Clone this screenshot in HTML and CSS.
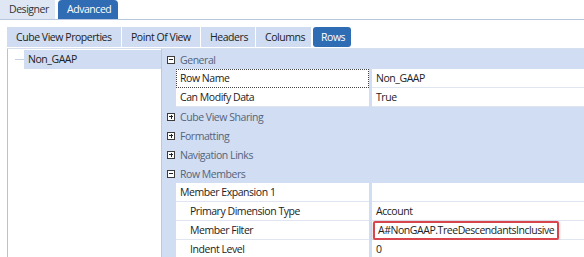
FILE: index.html
```html
<!DOCTYPE html>
<html lang="en">
<head>
    <meta charset="UTF-8">
    <title>Cube View - Rows</title>
    <link rel="stylesheet" href="styles.css">
</head>
<body>
    <div class="top-tabs">
        <div class="top-tab">Designer</div>
        <div class="top-tab active">Advanced</div>
    </div>
    <div class="sub-tabs">
        <div class="sub-tab tab-props">Cube View Properties</div>
        <div class="sub-tab tab-pov">Point Of View</div>
        <div class="sub-tab tab-headers">Headers</div>
        <div class="sub-tab tab-columns">Columns</div>
        <div class="sub-tab tab-rows active">Rows</div>
    </div>
    <div class="main">
        <div class="tree">
            <div class="tree-item">
                <span class="tree-line"></span>
                <span class="tree-label">Non_GAAP</span>
            </div>
        </div>
        <div class="grid">
            <div class="row cat">
                <span class="toggle minus"></span>
                <span class="cat-name">General</span>
            </div>
            <div class="row prop">
                <span class="gutter"></span>
                <span class="name focus">Row Name</span>
                <span class="value">Non_GAAP</span>
            </div>
            <div class="row prop">
                <span class="gutter"></span>
                <span class="name">Can Modify Data</span>
                <span class="value">True</span>
            </div>
            <div class="row cat">
                <span class="toggle plus"></span>
                <span class="cat-name">Cube View Sharing</span>
            </div>
            <div class="row cat">
                <span class="toggle plus"></span>
                <span class="cat-name">Formatting</span>
            </div>
            <div class="row cat">
                <span class="toggle plus"></span>
                <span class="cat-name">Navigation Links</span>
            </div>
            <div class="row cat">
                <span class="toggle minus"></span>
                <span class="cat-name">Row Members</span>
            </div>
            <div class="row prop">
                <span class="gutter"></span>
                <span class="name">Member Expansion 1</span>
                <span class="value"></span>
            </div>
            <div class="row prop">
                <span class="gutter"></span>
                <span class="name sub">Primary Dimension Type</span>
                <span class="value">Account</span>
            </div>
            <div class="row prop">
                <span class="gutter"></span>
                <span class="name sub">Member Filter</span>
                <span class="value"><span class="highlight">A#NonGAAP.TreeDescendantsInclusive</span></span>
            </div>
            <div class="row prop">
                <span class="gutter"></span>
                <span class="name sub">Indent Level</span>
                <span class="value">0</span>
            </div>
        </div>
    </div>
</body>
</html>
```
FILE: styles.css
```css
body {
    margin: 0;
    font-family: 'Open Sans', sans-serif;
    font-size: 10.5px;
    letter-spacing: -0.45px;
    color: #222;
    background: #fff;
    height: 257px;
    overflow: hidden;
}
.top-tabs {
    display: flex;
    gap: 3px;
    height: 19px;
    border-bottom: 1px solid #b8c6de;
}
.top-tab {
    padding: 0 9px;
    line-height: 19px;
    background-color: #dfe7f4;
    color: #333;
}
.top-tab:first-child {
    width: 37px;
}
.top-tab.active {
    width: 42px;
    background-color: #2f6cb4;
    color: #fff;
    border-radius: 4px 4px 0 0;
}
.sub-tabs {
    display: flex;
    gap: 1px;
    margin: 7px 0 0 7px;
    height: 20px;
}
.sub-tab {
    box-sizing: border-box;
    padding: 0 0 0 9px;
    line-height: 20px;
    background-color: #cfdcf1;
    color: #222;
    white-space: nowrap;
}
.tab-props { width: 114px; }
.tab-pov { width: 78px; }
.tab-headers { width: 54px; }
.tab-columns { width: 55px; }
.tab-rows { width: 38px; }
.sub-tab.active {
    margin-left: 1px;
    padding-left: 8px;
    background-color: #2e6cb3;
    color: #fff;
    border-radius: 3px;
}
.main {
    display: flex;
    margin: 1px 0 0 7px;
    border-top: 1px solid #d6dfee;
    height: 209px;
}
.tree {
    width: 153px;
    padding-top: 1px;
    border-left: 1px solid #b3c1e2;
    background: #fff;
}
.tree-item {
    display: flex;
    align-items: center;
    height: 19px;
}
.tree-line {
    width: 9px;
    margin-left: 7px;
    border-top: 1px solid #c6cfdf;
}
.tree-label {
    flex: 1;
    padding-left: 4px;
    line-height: 19px;
    background-color: #cfdcf1;
}
.grid {
    flex: 1;
    padding-top: 1px;
    border-left: 1px solid #b9c8e8;
    background-color: #d0ddf3;
}
.row {
    display: flex;
    height: 19px;
    line-height: 18px;
}
.cat {
    align-items: center;
}
.toggle {
    position: relative;
    width: 6px;
    height: 6px;
    margin: 0 0 0 5px;
    border: 1px solid #3c3c3c;
    background: #fff;
}
.toggle::before,
.toggle::after {
    content: '';
    position: absolute;
    background: #222;
}
.toggle::before {
    left: 1px;
    top: 2.5px;
    width: 4px;
    height: 1px;
}
.plus::after {
    left: 2.5px;
    top: 1px;
    width: 1px;
    height: 4px;
}
.cat-name {
    margin-left: 5px;
    color: #56647a;
}
.gutter {
    width: 14px;
}
.name,
.value {
    box-sizing: border-box;
    padding-left: 4px;
    background: #fff;
    border-bottom: 1px solid #e0e6f1;
    white-space: nowrap;
}
.name {
    width: 193px;
}
.name.sub {
    padding-left: 14px;
}
.name.focus {
    border: 1px dotted #444;
    padding-left: 3px;
    line-height: 17px;
}
.value {
    flex: 1;
    margin-left: 3px;
}
.highlight {
    display: inline-block;
    margin: 0 0 0 -3px;
    padding: 0 3px;
    line-height: 15px;
    border: 2px solid #d8454c;
    border-radius: 2px;
    box-shadow: 0 1px 3px rgba(120, 40, 40, 0.35);
}
```
